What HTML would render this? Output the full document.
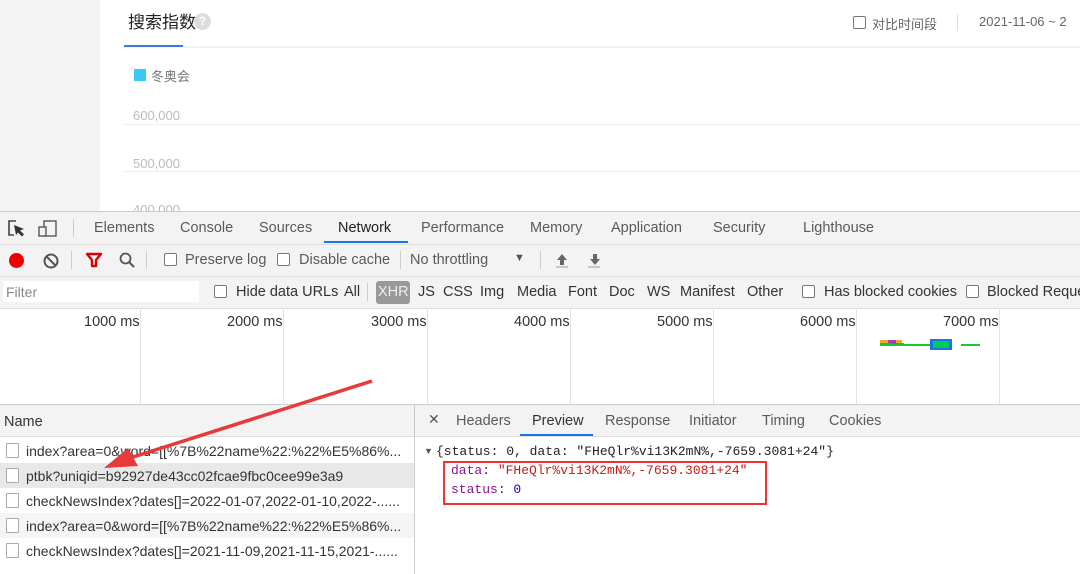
<!DOCTYPE html><html><head><meta charset="utf-8"><style>
*{margin:0;padding:0;box-sizing:border-box}
body{width:1080px;height:574px;overflow:hidden;background:#fff;font-family:"Liberation Sans","Noto Sans CJK SC",sans-serif;position:relative;color:#333}
.a{position:absolute;white-space:nowrap}
.t{font-size:14.5px;color:#333}
.r{font-size:14px;color:#333}
.g{color:#5a5a5a}
.cb{position:absolute;width:13px;height:13px;border:1px solid #777;border-radius:2px;background:#fff}
.mono{font-family:"Liberation Mono",monospace;font-size:13px}
</style></head><body>
<div class="a" style="left:0;top:0;width:100px;height:211px;background:#f3f3f3"></div>
<div class="a" style="left:128px;top:8px;font-size:17px;color:#222">搜索指数</div>
<div class="a" style="left:194px;top:13px;width:17px;height:17px;border-radius:50%;background:#ddd;color:#fff;font-size:12px;text-align:center;line-height:17px;font-weight:bold">?</div>
<div class="a" style="left:124px;top:46px;width:956px;height:2px;background:#f3f3f3"></div>
<div class="a" style="left:124px;top:45px;width:59px;height:2px;background:#3a7ae0"></div>
<div class="cb" style="left:853px;top:16px;border-color:#777;width:13px;height:13px"></div>
<div class="a" style="left:872px;top:14px;font-size:13px;color:#666">对比时间段</div>
<div class="a" style="left:957px;top:14px;width:1px;height:16px;background:#ddd"></div>
<div class="a" style="left:979px;top:14px;font-size:13px;color:#666">2021-11-06 ~ 2</div>
<div class="a" style="left:134px;top:69px;width:12px;height:12px;background:#3cc8f5"></div>
<div class="a" style="left:151px;top:66px;font-size:13px;color:#777">冬奥会</div>
<div class="a" style="left:133px;top:108px;font-size:13px;color:#bbb">600,000</div>
<div class="a" style="left:124px;top:124px;width:956px;height:1px;background:#eee"></div>
<div class="a" style="left:133px;top:156px;font-size:13px;color:#bbb">500,000</div>
<div class="a" style="left:124px;top:171px;width:956px;height:1px;background:#eee"></div>
<div class="a" style="left:133px;top:202px;font-size:13px;color:#bbb;height:9px;overflow:hidden">400,000</div>

<!-- devtools -->
<div class="a" style="left:0;top:211px;width:1080px;height:97px;background:#f3f3f3;border-top:1px solid #ccc"></div>
<div class="a" style="left:0;top:244px;width:1080px;height:1px;background:#ddd"></div>
<div class="a" style="left:0;top:276px;width:1080px;height:1px;background:#ddd"></div>
<svg class="a" style="left:6px;top:218px" width="56" height="22" viewBox="0 0 56 22"><path d="M10 3H3v14h5" fill="none" stroke="#444" stroke-width="1.6"/><path d="M8 7l10 4-4 1.5 4 4-2 2-4-4L10 17z" fill="#333"/><rect x="38" y="3" width="12" height="15" fill="none" stroke="#555" stroke-width="1.4"/><rect x="33" y="9" width="7" height="9" fill="#f3f3f3" stroke="#555" stroke-width="1.4"/></svg>
<div class="a" style="left:73px;top:219px;width:1px;height:18px;background:#ccc"></div>
<div class="a t g" style="left:94px;top:220px">Elements</div>
<div class="a t g" style="left:180px;top:220px">Console</div>
<div class="a t g" style="left:259px;top:220px">Sources</div>
<div class="a t" style="left:338px;top:220px;color:#222">Network</div>
<div class="a" style="left:324px;top:241px;width:84px;height:2px;background:#1a73e8"></div>
<div class="a t g" style="left:421px;top:220px">Performance</div>
<div class="a t g" style="left:530px;top:220px">Memory</div>
<div class="a t g" style="left:611px;top:220px">Application</div>
<div class="a t g" style="left:713px;top:220px">Security</div>
<div class="a t g" style="left:803px;top:220px">Lighthouse</div>

<div class="a" style="left:9px;top:253px;width:15px;height:15px;border-radius:50%;background:#e00"></div>
<svg class="a" style="left:42px;top:252px" width="18" height="18"><circle cx="9" cy="9" r="6.5" fill="none" stroke="#555" stroke-width="2"/><path d="M4.5 4.5l9 9" stroke="#555" stroke-width="2"/></svg>
<div class="a" style="left:71px;top:251px;width:1px;height:18px;background:#ccc"></div>
<svg class="a" style="left:85px;top:252px" width="18" height="16"><path d="M2 2h14l-5 6v6h-4v-6z" fill="none" stroke="#d00" stroke-width="2.4" stroke-linejoin="round"/></svg>
<svg class="a" style="left:118px;top:251px" width="18" height="18"><circle cx="7.5" cy="7.5" r="5" fill="none" stroke="#555" stroke-width="1.8"/><path d="M11 11l5 5" stroke="#555" stroke-width="2"/></svg>
<div class="a" style="left:146px;top:251px;width:1px;height:18px;background:#ccc"></div>
<div class="cb" style="left:164px;top:253px"></div>
<div class="a t g" style="left:185px;top:252px">Preserve log</div>
<div class="cb" style="left:277px;top:253px"></div>
<div class="a t g" style="left:299px;top:252px">Disable cache</div>
<div class="a" style="left:400px;top:251px;width:1px;height:18px;background:#ccc"></div>
<div class="a t g" style="left:410px;top:252px">No throttling</div>
<div class="a" style="left:514px;top:252px;font-size:11px;color:#555">▼</div>
<div class="a" style="left:540px;top:251px;width:1px;height:18px;background:#ccc"></div>
<svg class="a" style="left:554px;top:251px" width="50" height="18"><path d="M8 3l5 6h-3v5h-4v-5h-3z" fill="#666"/><path d="M2 16h12" stroke="#999"/><path d="M41 14l5-6h-3v-5h-4v5h-3z" fill="#666"/><path d="M34 16h12" stroke="#999"/></svg>

<div class="a" style="left:3px;top:281px;width:196px;height:21px;background:#fff"></div>
<div class="a" style="left:6px;top:284px;font-size:14px;color:#888">Filter</div>
<div class="cb" style="left:214px;top:285px"></div>
<div class="a t" style="left:236px;top:284px">Hide data URLs</div>
<div class="a t" style="left:344px;top:284px">All</div>
<div class="a" style="left:367px;top:283px;width:1px;height:18px;background:#ccc"></div>
<div class="a" style="left:376px;top:281px;width:34px;height:23px;background:#999;border-radius:3px"></div>
<div class="a t" style="left:378px;top:284px;color:#eee">XHR</div>
<div class="a t" style="left:418px;top:284px">JS</div>
<div class="a t" style="left:443px;top:284px">CSS</div>
<div class="a t" style="left:480px;top:284px">Img</div>
<div class="a t" style="left:517px;top:284px">Media</div>
<div class="a t" style="left:568px;top:284px">Font</div>
<div class="a t" style="left:609px;top:284px">Doc</div>
<div class="a t" style="left:647px;top:284px">WS</div>
<div class="a t" style="left:680px;top:284px">Manifest</div>
<div class="a t" style="left:747px;top:284px">Other</div>
<div class="cb" style="left:802px;top:285px"></div>
<div class="a t" style="left:824px;top:284px">Has blocked cookies</div>
<div class="cb" style="left:966px;top:285px"></div>
<div class="a t" style="left:987px;top:284px">Blocked Reque</div>

<!-- timeline -->
<div class="a" style="left:0;top:308px;width:1080px;height:96px;background:#fff;border-top:1px solid #ddd"></div>
<div class="a" style="left:140px;top:308px;width:1px;height:96px;background:#e3e3e3"></div>
<div class="a" style="left:283px;top:308px;width:1px;height:96px;background:#e3e3e3"></div>
<div class="a" style="left:427px;top:308px;width:1px;height:96px;background:#e3e3e3"></div>
<div class="a" style="left:570px;top:308px;width:1px;height:96px;background:#e3e3e3"></div>
<div class="a" style="left:713px;top:308px;width:1px;height:96px;background:#e3e3e3"></div>
<div class="a" style="left:856px;top:308px;width:1px;height:96px;background:#e3e3e3"></div>
<div class="a" style="left:999px;top:308px;width:1px;height:96px;background:#e3e3e3"></div>
<div class="a t" style="left:84px;top:314px">1000 ms</div>
<div class="a t" style="left:227px;top:314px">2000 ms</div>
<div class="a t" style="left:371px;top:314px">3000 ms</div>
<div class="a t" style="left:514px;top:314px">4000 ms</div>
<div class="a t" style="left:657px;top:314px">5000 ms</div>
<div class="a t" style="left:800px;top:314px">6000 ms</div>
<div class="a t" style="left:943px;top:314px">7000 ms</div>
<svg class="a" style="left:878px;top:338px" width="104" height="14"><rect x="2" y="2" width="22" height="3" fill="#f5a623"/><rect x="10" y="2" width="8" height="3" fill="#a040c0"/><rect x="2" y="5" width="24" height="3" fill="#3a7"/><rect x="12" y="5" width="8" height="3" fill="#b040c0"/><rect x="2" y="6" width="50" height="2" fill="#1c3"/><rect x="52" y="1" width="22" height="11" fill="#1a73e8"/><rect x="55" y="3" width="16" height="7" fill="#0c5"/><rect x="83" y="6" width="19" height="2" fill="#1c3"/></svg>

<!-- bottom -->
<div class="a" style="left:0;top:404px;width:1080px;height:1px;background:#ccc"></div>
<div class="a" style="left:0;top:405px;width:1080px;height:32px;background:#f3f3f3;border-bottom:1px solid #ddd"></div>
<div class="a" style="left:414px;top:405px;width:1px;height:169px;background:#ccc"></div>
<div class="a t" style="left:4px;top:414px">Name</div>
<div class="a" style="left:428px;top:411px;font-size:14px;color:#555">✕</div>
<div class="a t g" style="left:456px;top:413px">Headers</div>
<div class="a t g" style="left:532px;top:413px;color:#333">Preview</div>
<div class="a" style="left:520px;top:434px;width:73px;height:2px;background:#1a73e8"></div>
<div class="a t g" style="left:605px;top:413px">Response</div>
<div class="a t g" style="left:689px;top:413px">Initiator</div>
<div class="a t g" style="left:762px;top:413px">Timing</div>
<div class="a t g" style="left:829px;top:413px">Cookies</div>

<div class="a" style="left:0;top:463px;width:414px;height:25px;background:#e8e8e8"></div>
<div class="a" style="left:0;top:513px;width:414px;height:25px;background:#f5f5f5"></div>
<div class="cb" style="left:6px;top:443px;width:13px;height:15px;border-color:#aaa;border-radius:1px"></div>
<div class="cb" style="left:6px;top:468px;width:13px;height:15px;border-color:#aaa;border-radius:1px"></div>
<div class="cb" style="left:6px;top:493px;width:13px;height:15px;border-color:#aaa;border-radius:1px"></div>
<div class="cb" style="left:6px;top:518px;width:13px;height:15px;border-color:#aaa;border-radius:1px"></div>
<div class="cb" style="left:6px;top:543px;width:13px;height:15px;border-color:#aaa;border-radius:1px"></div>
<div class="a r" style="left:26px;top:443px">index?area=0&amp;word=[[%7B%22name%22:%22%E5%86%...</div>
<div class="a r" style="left:26px;top:468px">ptbk?uniqid=b92927de43cc02fcae9fbc0cee99e3a9</div>
<div class="a r" style="left:26px;top:493px">checkNewsIndex?dates[]=2022-01-07,2022-01-10,2022-......</div>
<div class="a r" style="left:26px;top:518px">index?area=0&amp;word=[[%7B%22name%22:%22%E5%86%...</div>
<div class="a r" style="left:26px;top:543px">checkNewsIndex?dates[]=2021-11-09,2021-11-15,2021-......</div>

<div class="a" style="left:424px;top:446px;font-size:9px;color:#555">▼</div>
<div class="a mono" style="left:436px;top:444px;color:#222">{status: 0, data: "FHeQlr%vi13K2mN%,-7659.3081+24"}</div>
<div class="a mono" style="left:451px;top:463px"><span style="color:#881391">data</span>: <span style="color:#c41a16">"FHeQlr%vi13K2mN%,-7659.3081+24"</span></div>
<div class="a mono" style="left:451px;top:482px"><span style="color:#881391">status</span>: <span style="color:#1c00cf">0</span></div>
<div class="a" style="left:443px;top:461px;width:324px;height:44px;border:2px solid #e33"></div>

<svg class="a" style="left:0;top:0" width="1080" height="574"><path d="M372 381L130 458" stroke="#e83a3a" stroke-width="3.5" fill="none"/><path d="M104 468L128 448L138 466Z" fill="#e83a3a"/></svg>
</body></html>
